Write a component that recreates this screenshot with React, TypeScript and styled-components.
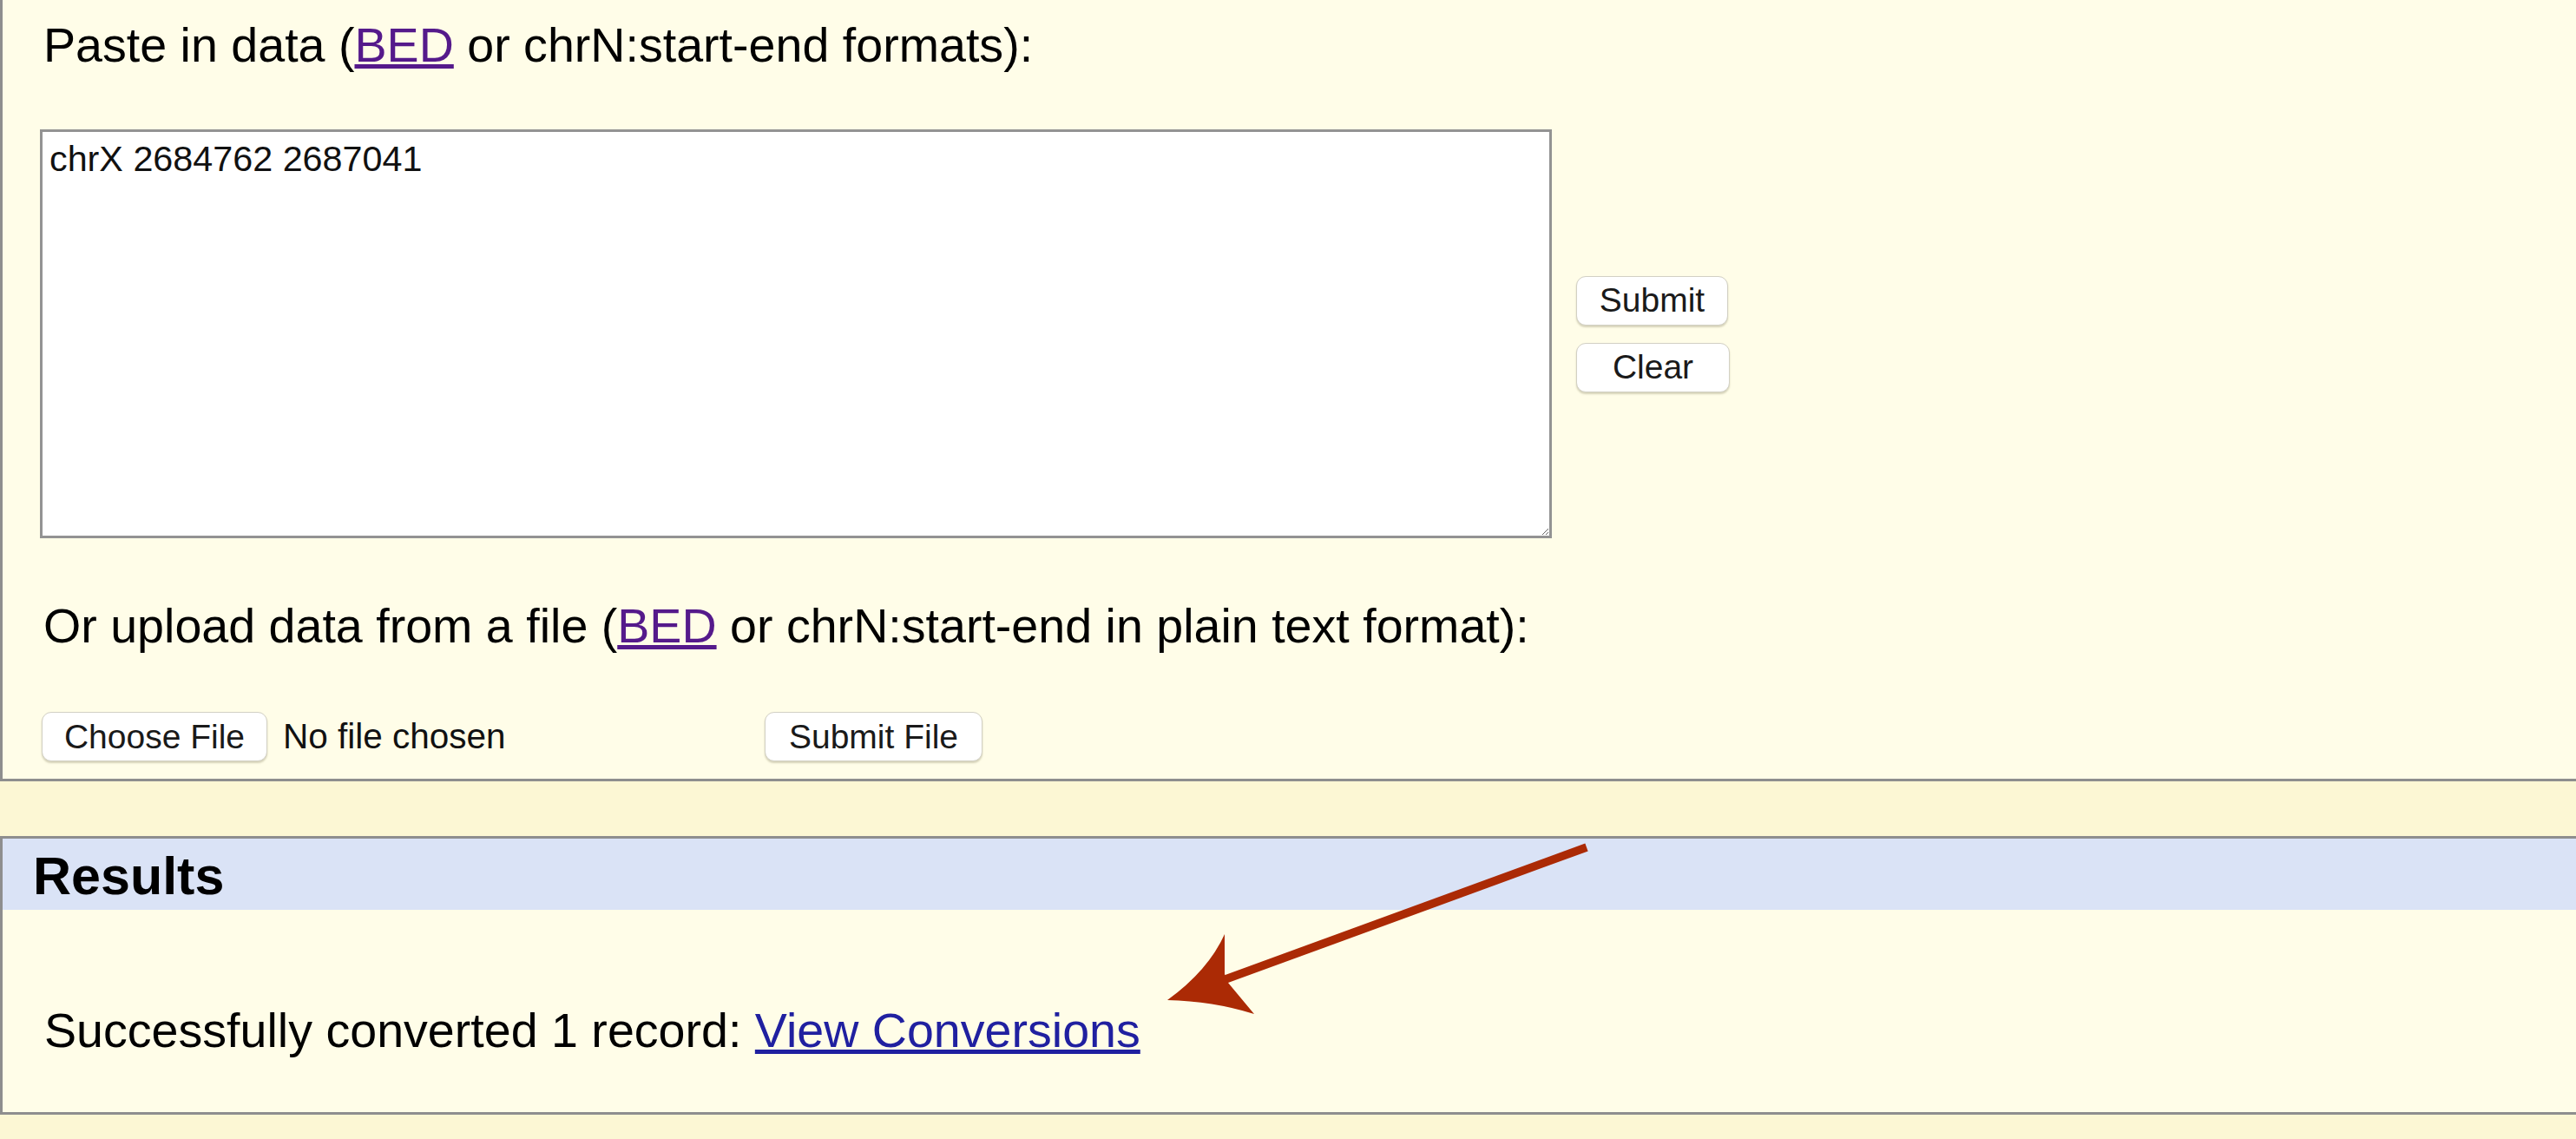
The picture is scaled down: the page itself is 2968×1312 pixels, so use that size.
import React from "react";
import styled, { createGlobalStyle } from "styled-components";

const GlobalStyle = createGlobalStyle`
  html, body { margin: 0; padding: 0; }
  body { background: #fcf7d4; }
`;

const Page = styled.div`
  position: relative;
  width: 100%;
  min-height: 1312px;
  overflow: hidden;
  background: #fcf7d4;
  font-family: "Liberation Sans", Arial, Helvetica, sans-serif;
  color: #000;
`;

const Panel = styled.section<{ $topBorder?: boolean }>`
  background: #fffde8;
  border-left: 3px solid #8e8e8e;
  border-bottom: 3px solid #8e8e8e;
  border-top: ${(p) => (p.$topBorder ? "3px solid #8e8e8e" : "none")};
`;

const InputPanel = styled(Panel)`
  padding: 20px 0 20px 43px;
`;

const ResultsPanel = styled(Panel)`
  margin-top: 63px;
`;

const Prompt = styled.p<{ $gap?: number }>`
  margin: ${(p) => p.$gap ?? 0}px 0 0;
  padding-left: 4px;
  font-size: 55.6px;
  line-height: 64px;
  white-space: nowrap;
`;

const VisitedLink = styled.a`
  color: #551a8b;
  text-decoration: underline;
`;

const BlueLink = styled.a`
  color: #2020a0;
  text-decoration: underline;
`;

const EditorRow = styled.div`
  margin-top: 65px;
  display: flex;
  align-items: center;
  gap: 28px;
`;

const DataArea = styled.textarea`
  box-sizing: border-box;
  width: 1742px;
  height: 471px;
  margin: 0;
  padding: 8px 8px 7px;
  border: 3px solid #939393;
  background: #fff;
  font-family: "Liberation Sans", Arial, Helvetica, sans-serif;
  font-size: 41.3px;
  line-height: 47px;
  color: #111;
  outline: none;
`;

const ButtonStack = styled.div`
  display: flex;
  flex-direction: column;
  gap: 20px;
`;

const Button = styled.button<{ $width: number }>`
  box-sizing: border-box;
  width: ${(p) => p.$width}px;
  height: 57px;
  padding: 0;
  margin: 0;
  border: 1.5px solid #d2d0c4;
  border-radius: 11px;
  background: #fff;
  box-shadow: 0 2px 2px rgba(120, 115, 80, 0.3);
  font-family: "Liberation Sans", Arial, Helvetica, sans-serif;
  font-size: 39px;
  color: #1a1a1a;
  cursor: pointer;
`;

const FileRow = styled.div`
  margin-top: 67px;
  display: flex;
  align-items: center;
  padding-left: 2px;
`;

const FileName = styled.span`
  width: 555px;
  margin-left: 18px;
  font-size: 40.5px;
  color: #111;
  white-space: nowrap;
`;

const ResultsHeader = styled.h2`
  box-sizing: border-box;
  margin: 0;
  height: 82px;
  padding: 4px 0 0 35px;
  background: #dae3f6;
  font-size: 61px;
  line-height: 78px;
  font-weight: bold;
`;

const ResultsBody = styled.div`
  padding: 107px 0 62px 48px;
`;

const ResultLine = styled.p`
  margin: 0;
  font-size: 55.6px;
  line-height: 64px;
  white-space: nowrap;
`;

const Annotation = styled.svg`
  position: absolute;
  left: 0;
  top: 0;
  width: 2968px;
  height: 1312px;
  pointer-events: none;
`;

export default function App() {
  return (
    <Page>
      <GlobalStyle />
      <InputPanel>
        <Prompt>
          Paste in data (<VisitedLink href="#">BED</VisitedLink> or chrN:start-end formats):
        </Prompt>
        <EditorRow>
          <DataArea defaultValue="chrX 2684762 2687041" />
          <ButtonStack>
            <Button $width={175}>Submit</Button>
            <Button $width={177}>Clear</Button>
          </ButtonStack>
        </EditorRow>
        <Prompt $gap={69}>
          Or upload data from a file (<VisitedLink href="#">BED</VisitedLink> or chrN:start-end in plain text format):
        </Prompt>
        <FileRow>
          <Button $width={260}>Choose File</Button>
          <FileName>No file chosen</FileName>
          <Button $width={251}>Submit File</Button>
        </FileRow>
      </InputPanel>
      <ResultsPanel $topBorder>
        <ResultsHeader>Results</ResultsHeader>
        <ResultsBody>
          <ResultLine>
            Successfully converted 1 record: <BlueLink href="#">View Conversions</BlueLink>
          </ResultLine>
        </ResultsBody>
      </ResultsPanel>
      <Annotation viewBox="0 0 2968 1312">
        <line x1="1828" y1="976" x2="1412" y2="1128" stroke="#ab2a05" strokeWidth="9.5" />
        <path
          d="M1345 1152 Q1392 1118 1411 1076 L1411 1122 L1415 1132 L1445 1168 Q1397 1153 1345 1152 Z"
          fill="#ab2a05"
        />
      </Annotation>
    </Page>
  );
}
